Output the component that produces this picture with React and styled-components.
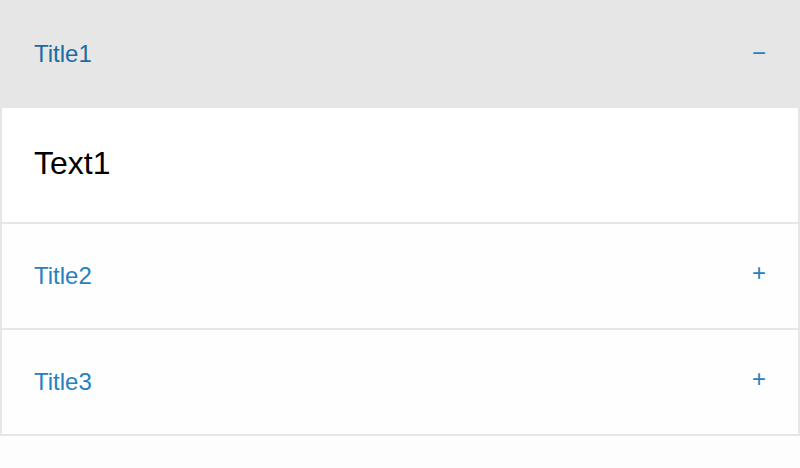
import { useState } from 'react'
import styled, { createGlobalStyle } from 'styled-components'

const GlobalStyle = createGlobalStyle`
  body {
    margin: 0;
    background: #fdfdfd;
    font-family: "Liberation Sans", Arial, sans-serif;
  }
`

const StyledAccordion = styled.div`
  display: flex;
  flex-direction: column;
  width: 800px;
  box-sizing: border-box;
  border: 2px solid #e6e6e6;
  border-bottom: none;
`

const Item = styled.div`
  display: flex;
  flex-direction: column;
  border-bottom: 2px solid #e6e6e6;
`

const Header = styled.button`
  display: flex;
  align-items: center;
  justify-content: space-between;
  height: 104px;
  padding: 0 32px;
  border: none;
  border-bottom: ${(props) => (props.open ? '2px solid #e6e6e6' : 'none')};
  box-sizing: content-box;
  background-color: ${(props) => (props.open ? '#e6e6e6' : '#fefefe')};
  color: ${(props) => (props.open ? '#1a6ca3' : '#2581bf')};
  font-family: inherit;
  font-size: 24px;
  text-align: left;
  cursor: pointer;

  &:focus {
    outline: none;
  }
`

const Sign = styled.span`
  font-size: 24px;
  margin-top: ${(props) => (props.open ? '-2px' : '-7px')};
  color: #2581bf;
`

const Body = styled.div`
  padding: 30px 32px 34px;
  font-size: 32px;
  line-height: 50px;
  color: #000;
  background: #fff;
`

const items = [
  { id: 1, title: 'Title1', text: 'Text1' },
  { id: 2, title: 'Title2', text: 'Text2' },
  { id: 3, title: 'Title3', text: 'Text3' },
]

function App() {
  const [openId, setOpenId] = useState(1)

  return (
    <>
      <GlobalStyle />
      <StyledAccordion>
        {items.map((item) => {
          const open = item.id === openId
          return (
            <Item key={item.id}>
              <Header open={open} onClick={() => setOpenId(open ? null : item.id)}>
                {item.title}
                <Sign open={open}>{open ? '−' : '+'}</Sign>
              </Header>
              {open && <Body>{item.text}</Body>}
            </Item>
          )
        })}
      </StyledAccordion>
    </>
  )
}

export default App
